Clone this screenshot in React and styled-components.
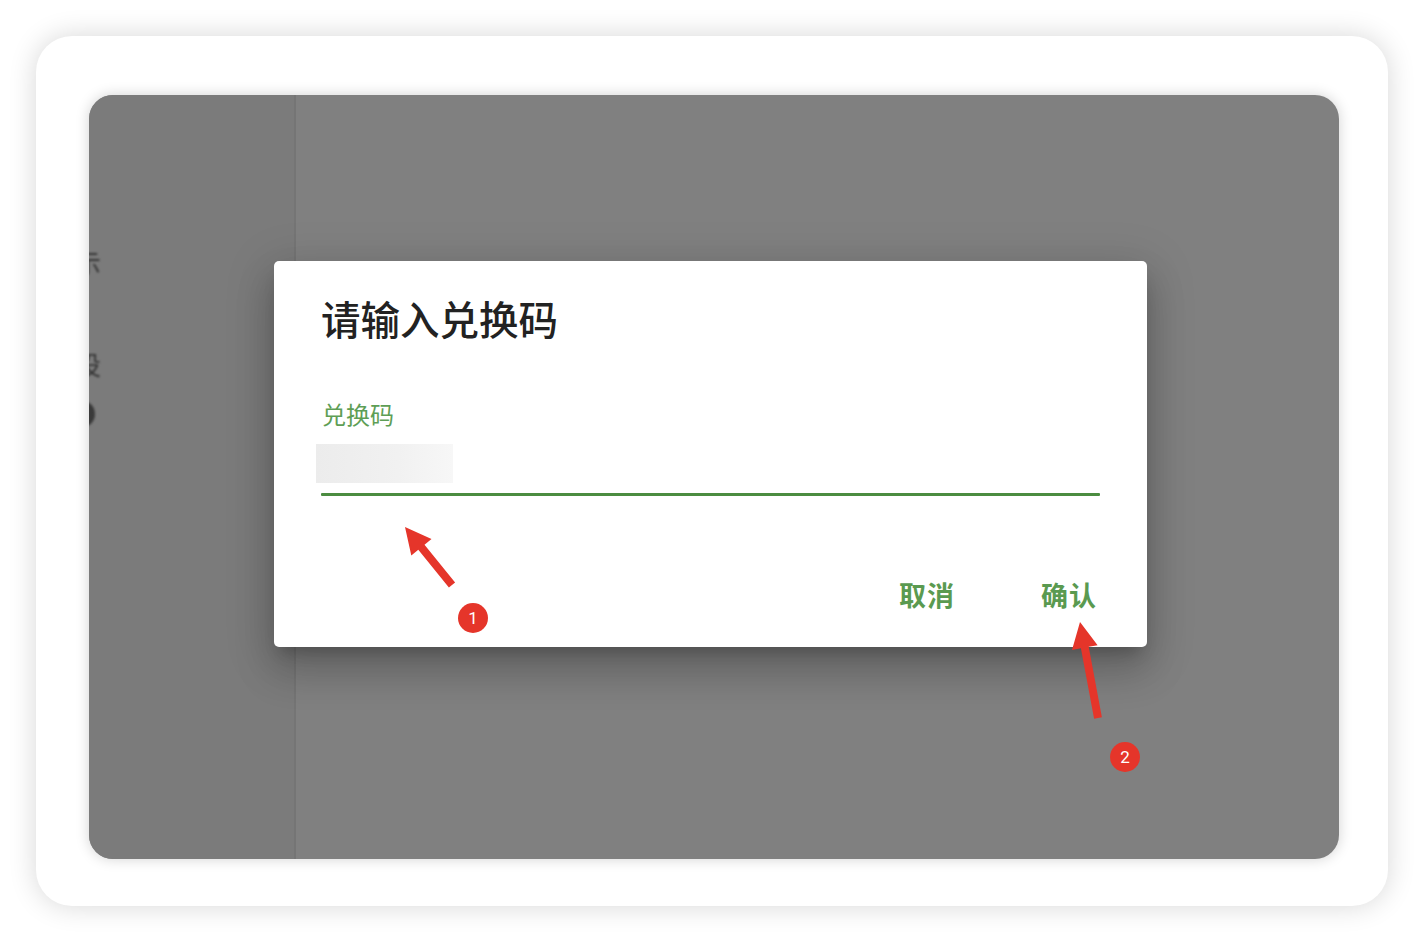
import React from 'react'
import styled, {createGlobalStyle} from 'styled-components'

const GlobalStyle = createGlobalStyle`
  html, body {
    margin: 0;
    padding: 0;
    background: #ffffff;
    font-family: 'Noto Sans CJK SC', 'Noto Sans', sans-serif;
  }
`

const Page = styled.div`
  position: relative;
  width: 1424px;
  height: 942px;
  padding: 36px;
  box-sizing: border-box;
  overflow: hidden;
`

const Frame = styled.div`
  width: 100%;
  height: 100%;
  background: #ffffff;
  border-radius: 36px;
  box-shadow: 0 0 28px rgba(0, 0, 0, 0.16);
  padding: 59px 49px 47px 53px;
  box-sizing: border-box;
  display: flex;
`

const Screen = styled.div`
  flex: 1;
  display: flex;
  background: #808080;
  border-radius: 24px;
  overflow: hidden;
  box-shadow: 0 0 14px rgba(0, 0, 0, 0.18);
  position: relative;
`

const Sidebar = styled.div`
  width: 205px;
  flex-shrink: 0;
  background: #7b7b7b;
  border-right: 2px solid #757575;
  display: flex;
  flex-direction: column;
  padding-top: 148px;
  overflow: hidden;
`

const SideItem = styled.div`
  margin-left: -14px;
  margin-bottom: ${p => p.gap}px;
  font-size: 26px;
  line-height: 38px;
  color: #363636;
  filter: blur(1px);
`

const SideIcon = styled.div`
  width: 24px;
  height: 26px;
  margin-left: -18px;
  margin-top: 4px;
  border-radius: 50%;
  background: #3a3a3a;
  filter: blur(1.2px);
`

const Main = styled.div`
  flex: 1;
`

const DialogLayer = styled.div`
  position: absolute;
  inset: 0;
  display: flex;
  align-items: flex-start;
  padding: 166px 0 0 185px;
`

const Dialog = styled.div`
  width: 873px;
  height: 386px;
  flex-shrink: 0;
  box-sizing: border-box;
  background: #ffffff;
  border-radius: 5px;
  box-shadow: 0 11px 15px -7px rgba(0, 0, 0, 0.22),
    0 24px 38px 3px rgba(0, 0, 0, 0.15),
    0 9px 46px 8px rgba(0, 0, 0, 0.12);
  padding: 29px 47px 0 47px;
  display: flex;
  flex-direction: column;
`

const Title = styled.h2`
  margin: 0;
  font-size: 39.5px;
  line-height: 56px;
  font-weight: 500;
  color: #222222;
`

const Field = styled.div`
  margin-top: 52px;
  display: flex;
  flex-direction: column;
`

const Label = styled.label`
  font-size: 24px;
  line-height: 32px;
  color: #5e9e55;
  padding-left: 1px;
`

const InputRow = styled.div`
  height: 46px;
  margin-top: 10px;
  display: flex;
  align-items: center;
`

const Blurred = styled.div`
  width: 137px;
  height: 39px;
  margin-left: -5px;
  background: linear-gradient(90deg, #ececec 0%, #f1f1f1 60%, #f7f7f7 100%);
`

const Underline = styled.div`
  height: 3px;
  background: #4b8c40;
  border-radius: 1px;
  margin-top: 7px;
`

const Actions = styled.div`
  margin-top: auto;
  margin-bottom: 34px;
  display: flex;
  justify-content: flex-end;
  gap: 86px;
  padding-right: 3px;
`

const TextButton = styled.button`
  border: none;
  background: none;
  padding: 0;
  font-family: inherit;
  font-size: 27px;
  line-height: 36px;
  font-weight: 600;
  color: #5a9a50;
  letter-spacing: 1px;
  cursor: pointer;
`

const Overlay = styled.svg`
  position: absolute;
  left: 0;
  top: 0;
  pointer-events: none;
`

const arrowPoints = (tx, ty, hx, hy, shaft = 8, headLen = 26, headW = 26) => {
  const dx = hx - tx
  const dy = hy - ty
  const len = Math.hypot(dx, dy)
  const ux = dx / len
  const uy = dy / len
  const nx = -uy
  const ny = ux
  const bx = hx - ux * headLen
  const by = hy - uy * headLen
  const pts = [
    [tx + nx * shaft / 2, ty + ny * shaft / 2],
    [bx + nx * shaft / 2, by + ny * shaft / 2],
    [bx + nx * headW / 2, by + ny * headW / 2],
    [hx, hy],
    [bx - nx * headW / 2, by - ny * headW / 2],
    [bx - nx * shaft / 2, by - ny * shaft / 2],
    [tx - nx * shaft / 2, ty - ny * shaft / 2],
  ]
  return pts.map(p => p.map(v => v.toFixed(1)).join(',')).join(' ')
}

const Badge = ({cx, cy, n}) => (
  <g>
    <circle cx={cx} cy={cy} r={15} fill='#e5352a'/>
    <text
      x={cx}
      y={cy + 6}
      textAnchor='middle'
      fontSize='17'
      fontFamily='Roboto, sans-serif'
      fill='#ffffff'
    >
      {n}
    </text>
  </g>
)

const App = () => {
  return (
    <>
      <GlobalStyle/>
      <Page>
        <Frame>
          <Screen>
            <Sidebar>
              <SideItem gap={64}>示</SideItem>
              <SideItem gap={14}>设</SideItem>
              <SideIcon/>
            </Sidebar>
            <Main/>
            <DialogLayer>
              <Dialog>
                <Title>请输入兑换码</Title>
                <Field>
                  <Label>兑换码</Label>
                  <InputRow>
                    <Blurred/>
                  </InputRow>
                  <Underline/>
                </Field>
                <Actions>
                  <TextButton>取消</TextButton>
                  <TextButton>确认</TextButton>
                </Actions>
              </Dialog>
            </DialogLayer>
          </Screen>
        </Frame>
        <Overlay width='1424' height='942' viewBox='0 0 1424 942'>
          <polygon points={arrowPoints(452, 585, 405, 527)} fill='#e5352a'/>
          <polygon points={arrowPoints(1098, 718, 1080, 622)} fill='#e5352a'/>
          <Badge cx={473} cy={618} n='1'/>
          <Badge cx={1125} cy={757} n='2'/>
        </Overlay>
      </Page>
    </>
  )
}

export default App
